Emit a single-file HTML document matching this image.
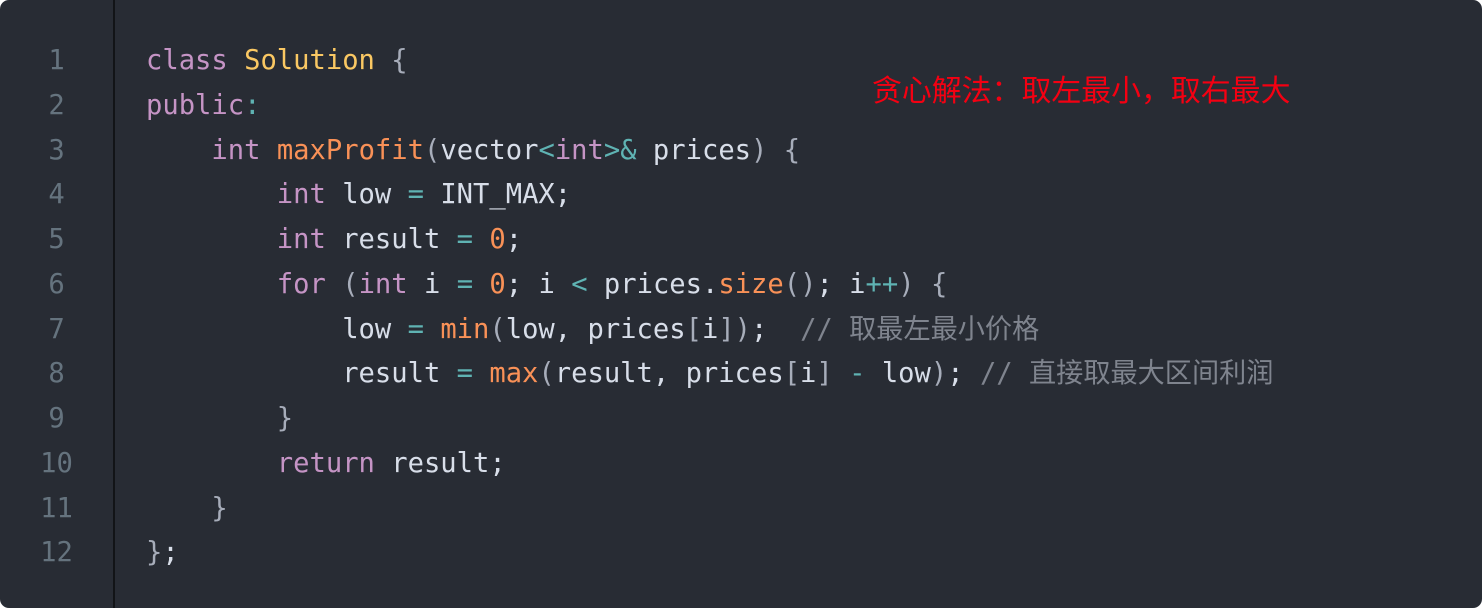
<!DOCTYPE html>
<html><head><meta charset="utf-8"><style>
html,body{margin:0;padding:0;background:#fff;width:1482px;height:608px;overflow:hidden}
.box{position:absolute;left:0;top:0;width:1482px;height:608px;background:#282c34;border-radius:9px;overflow:hidden}
.gut{position:absolute;left:0;top:0;width:113px;height:608px;border-right:2px solid #121417}
pre{margin:0;position:absolute;top:39px;font-family:"DejaVu Sans Mono","Liberation Mono","Noto Sans CJK SC",monospace;font-size:27.17px;line-height:44.75px;color:#d8dee9}
.ln{left:0;width:113px;text-align:center;color:#65737e}
.code{left:146px}
.k{color:#c594c5}.c{color:#fac863}.f{color:#f99157}.o{color:#5fb3b3}.n{color:#f99157}.cm{color:#7f848e}.p{color:#a7adba}
.note{position:absolute;left:872px;top:70px;font-family:"Noto Sans CJK SC",sans-serif;font-size:29.9px;line-height:36px;color:#f40012}
</style></head><body><div class="box">
<div class="gut"></div>
<pre class="ln">1
2
3
4
5
6
7
8
9
10
11
12</pre>
<pre class="code"><span class="k">class</span> <span class="c">Solution</span> <span class="p">{</span>
<span class="k">public</span><span class="o">:</span>
    <span class="k">int</span> <span class="f">maxProfit</span><span class="p">(</span>vector<span class="o">&lt;</span><span class="k">int</span><span class="o">&gt;&amp;</span> prices<span class="p">)</span> <span class="p">{</span>
        <span class="k">int</span> low <span class="o">=</span> INT_MAX;
        <span class="k">int</span> result <span class="o">=</span> <span class="n">0</span>;
        <span class="k">for</span> <span class="p">(</span><span class="k">int</span> i <span class="o">=</span> <span class="n">0</span>; i <span class="o">&lt;</span> prices.<span class="f">size</span><span class="p">()</span>; i<span class="o">++</span><span class="p">)</span> <span class="p">{</span>
            low <span class="o">=</span> <span class="f">min</span><span class="p">(</span>low, prices<span class="p">[</span>i<span class="p">])</span>;  <span class="cm">// 取最左最小价格</span>
            result <span class="o">=</span> <span class="f">max</span><span class="p">(</span>result, prices<span class="p">[</span>i<span class="p">]</span> <span class="o">-</span> low<span class="p">)</span>; <span class="cm">// 直接取最大区间利润</span>
        <span class="p">}</span>
        <span class="k">return</span> result;
    <span class="p">}</span>
<span class="p">}</span>;</pre>
<div class="note">贪心解法：取左最小，取右最大</div>
</div></body></html>
